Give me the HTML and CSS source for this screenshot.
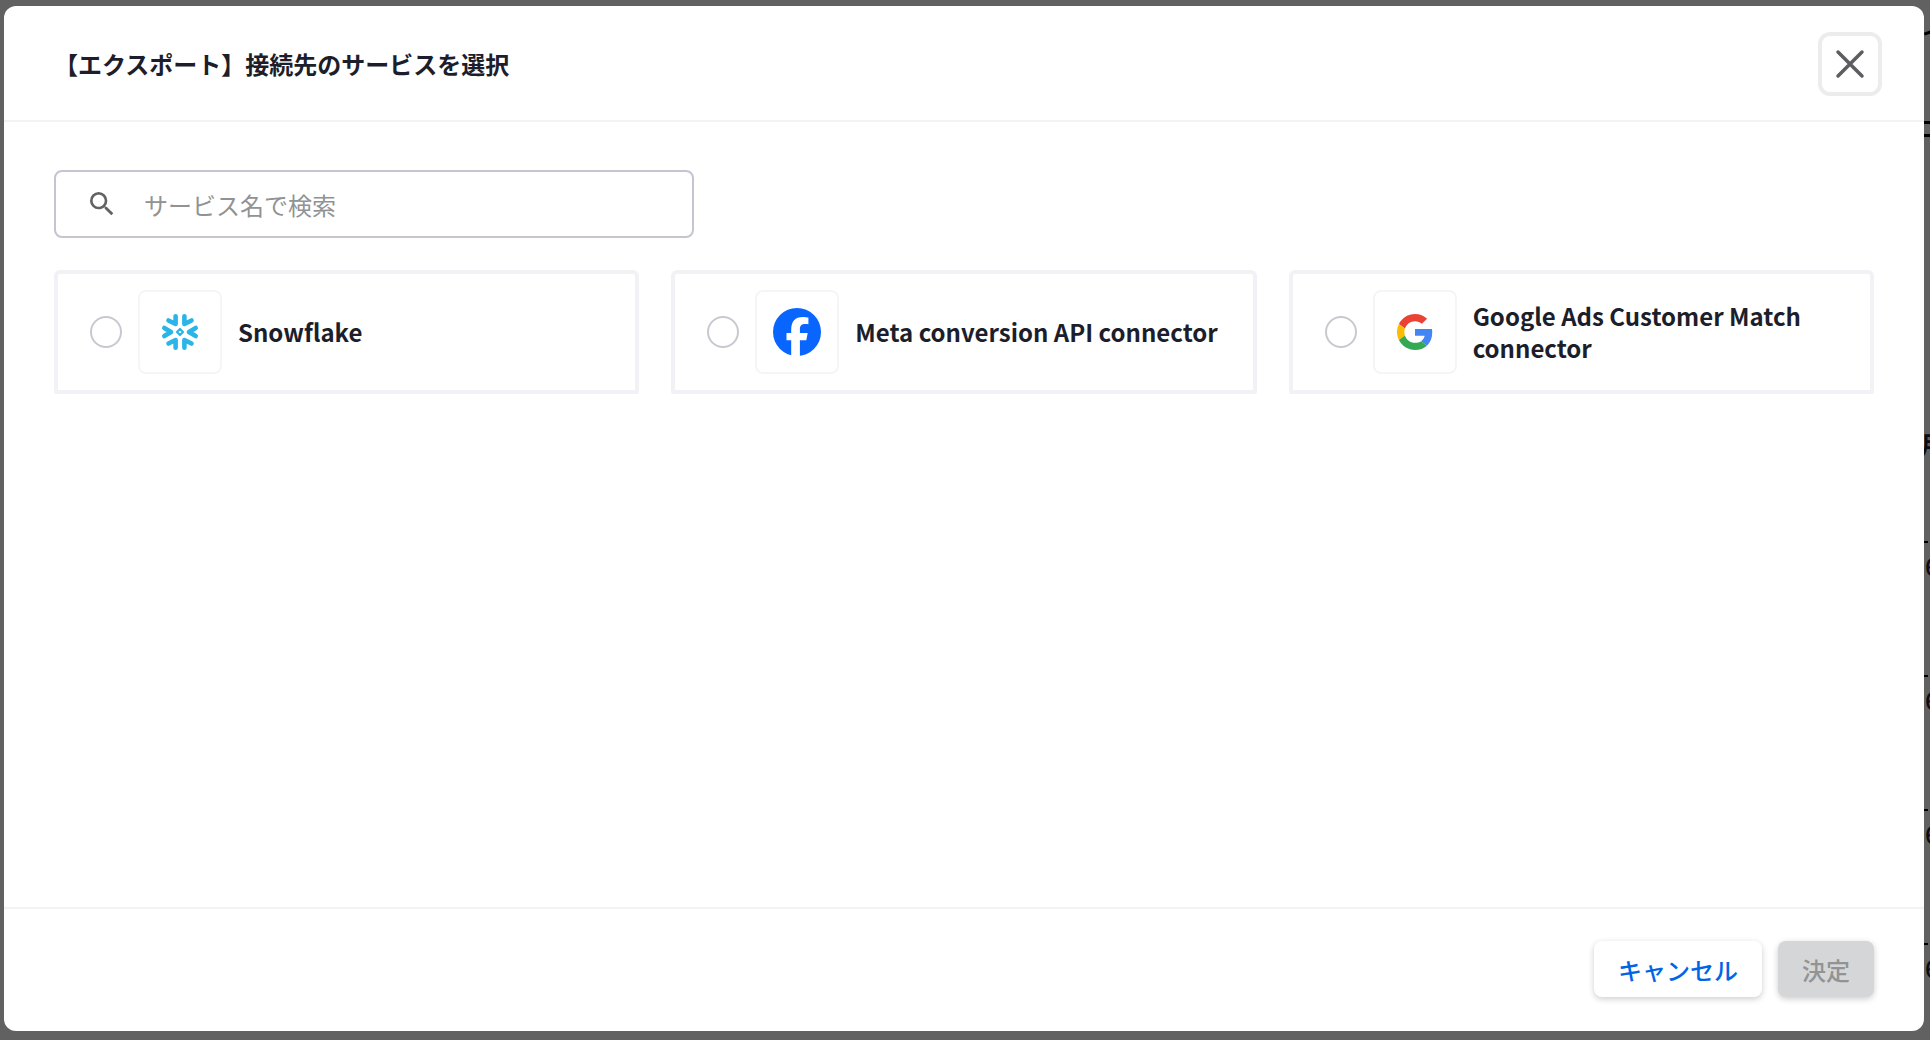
FILE: index.html
```html
<!DOCTYPE html>
<html lang="ja">
<head>
    <meta charset="UTF-8">
    <meta name="viewport" content="width=device-width, initial-scale=1.0">
    <title>接続先のサービスを選択</title>
    <link rel="stylesheet" href="styles.css">
</head>
<body>
    <!-- page behind the dialog -->
    <div class="backdrop" aria-hidden="true">
        <span class="peek peek-curve"></span>
        <span class="peek peek-lines"></span>
        <span class="peek peek-month">月</span>
        <span class="peek peek-row row-1">6</span>
        <span class="peek peek-row row-2">6</span>
        <span class="peek peek-row row-3">6</span>
        <span class="peek peek-row row-4">6</span>
    </div>

    <div class="modal" role="dialog" aria-labelledby="modal-title">
        <header class="modal-header">
            <h1 id="modal-title">【エクスポート】接続先のサービスを選択</h1>
            <button type="button" class="close-button" aria-label="閉じる">
                <svg width="30" height="30" viewBox="0 0 30 30" fill="none" stroke="#5b5d61" stroke-width="3.500" stroke-linecap="round">
                    <path d="M3 3L27 27M27 3L3 27"/>
                </svg>
            </button>
        </header>

        <main class="modal-body">
            <label class="search">
                <svg width="32" height="32" viewBox="0 0 24 24" fill="#626262">
                    <path d="M15.5 14h-.79l-.28-.27A6.47 6.47 0 0 0 16 9.5 6.5 6.5 0 1 0 9.5 16c1.61 0 3.09-.59 4.23-1.57l.27.28v.79l5 4.99L20.49 19l-4.99-5zm-6 0C7.01 14 5 11.99 5 9.5S7.01 5 9.5 5 14 7.01 14 9.5 11.99 14 9.5 14z"/>
                </svg>
                <input type="text" placeholder="サービス名で検索" aria-label="サービス名で検索">
            </label>

            <div class="services">
                <label class="service">
                    <input type="radio" name="service" value="snowflake">
                    <span class="logo">
                        <svg width="38" height="38" viewBox="0 0 38 38" fill="none" stroke="#29b5e8" stroke-width="4.600" stroke-linecap="round" stroke-linejoin="round">
                            <path d="M3.300 15L10 19L3.300 23"/>
                            <path d="M34.700 15L28 19L34.700 23"/>
                            <path d="M14.600 3.300V11L7.500 7.500"/>
                            <path d="M23.400 3.300V11L30.500 7.500"/>
                            <path d="M14.600 34.700V27L7.500 30.500"/>
                            <path d="M23.400 34.700V27L30.500 30.500"/>
                            <path d="M19 16L22 19L19 22L16 19Z" stroke-width="2.200"/>
                        </svg>
                    </span>
                    <span class="service-name">Snowflake</span>
                </label>

                <label class="service">
                    <input type="radio" name="service" value="meta">
                    <span class="logo">
                        <svg width="48" height="48" viewBox="0 0 48 48">
                            <circle cx="24" cy="24" r="24" fill="#0866ff"/>
                            <path fill="#fff" d="M18.200 48V32.300H13.500V25h4.700V22C18.200 13 22 9 30 9c1.600 0 4.200.3 5.400.6v6.600c-.6-.1-1.700-.1-3-.1-4 0-5.500 1.500-5.500 5.400V25h7.800l-1.400 7.300h-6.400V48z"/>
                        </svg>
                    </span>
                    <span class="service-name">Meta conversion API connector</span>
                </label>

                <label class="service">
                    <input type="radio" name="service" value="google-ads">
                    <span class="logo">
                        <svg width="36" height="36" viewBox="0 0 48 48">
                            <path fill="#EA4335" d="M24 9.500c3.540 0 6.710 1.220 9.210 3.600l6.850-6.850C35.900 2.380 30.470 0 24 0 14.620 0 6.510 5.380 2.560 13.220l7.980 6.190C12.430 13.720 17.740 9.500 24 9.500z"/>
                            <path fill="#4285F4" d="M46.980 24.550c0-1.570-.15-3.090-.38-4.550H24v9.020h12.940c-.58 2.960-2.260 5.480-4.780 7.180l7.730 6c4.510-4.180 7.090-10.360 7.090-17.650z"/>
                            <path fill="#FBBC05" d="M10.530 28.590c-.48-1.450-.76-2.990-.76-4.590s.27-3.140.76-4.590l-7.980-6.190C.92 16.460 0 20.120 0 24c0 3.880.92 7.540 2.560 10.780l7.970-6.190z"/>
                            <path fill="#34A853" d="M24 48c6.480 0 11.930-2.130 15.890-5.810l-7.730-6c-2.150 1.450-4.920 2.300-8.160 2.300-6.260 0-11.570-4.220-13.470-9.910l-7.980 6.190C6.510 42.620 14.620 48 24 48z"/>
                        </svg>
                    </span>
                    <span class="service-name">Google Ads Customer Match connector</span>
                </label>
            </div>
        </main>

        <footer class="modal-footer">
            <button type="button" class="button cancel-button">キャンセル</button>
            <button type="button" class="button submit-button" disabled>決定</button>
        </footer>
    </div>
</body>
</html>
```
FILE: styles.css
```css
* {
    box-sizing: border-box;
}
body {
    margin: 0;
    height: 100vh;
    padding: 6px 6px 9px 4px;
    display: flex;
    background-color: #616161;
    color: #1c1e2b;
    font-family: "Noto Sans CJK JP", sans-serif;
    font-size: 24px;
    overflow: hidden;
}
.backdrop {
    position: absolute;
    inset: 0;
    overflow: hidden;
    color: #0c0d12;
}
.peek {
    position: absolute;
    left: 100%;
    margin-left: -6px;
}
.peek-curve {
    top: 31px;
    width: 10px;
    height: 3px;
    background-color: #000;
    transform: rotate(-20deg);
}
.peek-lines {
    top: 121px;
    width: 6px;
    height: 16px;
    border-top: 3px solid #000;
    border-bottom: 3px solid #000;
}
.peek-month {
    top: 426px;
    margin-left: -10px;
    font-weight: bold;
}
.peek-row {
    padding-left: 1px;
    font-weight: 500;
    line-height: 30px;
}
.peek-row::before {
    content: "";
    position: absolute;
    left: 0;
    top: -10px;
    width: 4px;
    height: 2px;
    background-color: #000;
}
.row-1 {
    top: 551px;
}
.row-2 {
    top: 685px;
}
.row-3 {
    top: 819px;
}
.row-4 {
    top: 953px;
}
.modal {
    position: relative;
    flex: 1;
    display: flex;
    flex-direction: column;
    background-color: #fff;
    border-radius: 12px;
}
.modal-header {
    display: flex;
    align-items: center;
    justify-content: space-between;
    padding: 26px 42px 24px 50px;
    border-bottom: 2px solid #f3f3f4;
}
h1 {
    margin: 0;
    font-size: 24px;
    line-height: 36px;
}
.close-button {
    display: flex;
    align-items: center;
    justify-content: center;
    width: 64px;
    height: 64px;
    padding: 0;
    border: 4px solid #ececec;
    border-radius: 12px;
    background-color: #fff;
}
.modal-body {
    flex: 1;
    padding: 48px 50px;
}
.search {
    display: flex;
    align-items: center;
    gap: 26px;
    width: 640px;
    max-width: 100%;
    height: 68px;
    padding: 0 30px;
    border: 2px solid #c5c5d0;
    border-radius: 8px;
}
.search input {
    flex: 1;
    min-width: 0;
    padding: 0;
    border: none;
    outline: none;
    color: inherit;
    font: inherit;
}
.search input::placeholder {
    color: #919293;
}
.services {
    display: grid;
    grid-template-columns: repeat(3, 1fr);
    gap: 32px;
    margin-top: 32px;
}
.service {
    display: flex;
    align-items: center;
    gap: 16px;
    padding: 16px 32px;
    border: 4px solid #f2f2f6;
    border-radius: 6px 6px 2px 2px;
}
.service input {
    appearance: none;
    flex: none;
    width: 32px;
    height: 32px;
    margin: 0;
    border: 2px solid #c8c8d0;
    border-radius: 50%;
}
.service input:checked {
    border: 10px solid #0064e6;
}
.logo {
    flex: none;
    display: flex;
    align-items: center;
    justify-content: center;
    width: 84px;
    height: 84px;
    border: 2px solid #f5f5f6;
    border-radius: 8px;
}
.service-name {
    font-weight: bold;
    line-height: 32px;
}
.modal-footer {
    display: flex;
    justify-content: flex-end;
    gap: 16px;
    padding: 32px 50px 34px;
    border-top: 2px solid #f3f3f4;
}
.button {
    height: 56px;
    padding: 0 24px;
    border: none;
    border-radius: 8px;
    box-shadow: 0 2px 6px rgba(0, 0, 0, 0.2);
    font-family: inherit;
    font-size: 24px;
    font-weight: 500;
}
.cancel-button {
    background-color: #fff;
    color: #0064e6;
}
.submit-button {
    background-color: #d5d6d8;
    color: #929394;
}
```
